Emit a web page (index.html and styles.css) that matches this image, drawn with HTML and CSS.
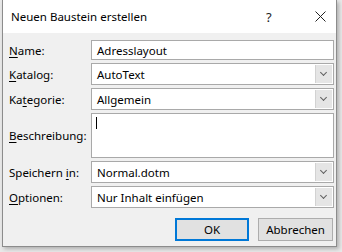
FILE: index.html
```html
<!DOCTYPE html>
<html lang="de">
<head>
    <meta charset="UTF-8">
    <meta name="viewport" content="width=device-width, initial-scale=1.0">
    <title>Neuen Baustein erstellen</title>
    <link rel="stylesheet" href="styles.css">
</head>
<body>

<div class="dialog">
    <div class="titlebar">
        <span class="title">Neuen Baustein erstellen</span>
        <span class="help">?</span>
        <span class="close">
            <svg width="11" height="11" viewBox="0 0 11 11"><path d="M0.5 0.5 L10.5 10.5 M10.5 0.5 L0.5 10.5" stroke="#222" stroke-width="1" fill="none"/></svg>
        </span>
    </div>

    <div class="content">
        <div class="form">
            <label class="label"><span><u>N</u>ame:</span></label>
            <div class="field">Adresslayout</div>

            <label class="label"><span><u>K</u>atalog:</span></label>
            <div class="field combo">AutoText<span class="arrow"></span></div>

            <label class="label"><span>Ka<u>t</u>egorie:</span></label>
            <div class="field combo">Allgemein<span class="arrow"></span></div>

            <label class="label"><span><u>B</u>eschreibung:</span></label>
            <div class="field area"><span class="caret"></span></div>

            <label class="label"><span>Speichern <u>i</u>n:</span></label>
            <div class="field combo">Normal.dotm<span class="arrow"></span></div>

            <label class="label"><span><u>O</u>ptionen:</span></label>
            <div class="field combo">Nur Inhalt einfügen<span class="arrow"></span></div>
        </div>

        <div class="buttons">
            <button class="btn default">OK</button>
            <button class="btn">Abbrechen</button>
        </div>
    </div>
</div>

</body>
</html>
```

FILE: styles.css
```css
body {
    margin: 0;
    width: 342px;
    height: 252px;
    background-color: #e9e9e9;
    font-family: "Noto Sans", "Open Sans", sans-serif;
    font-size: 11.5px;
    color: #000;
    overflow: hidden;
}
.dialog {
    margin-left: 2px;
    width: 335px;
    height: 247px;
    border: 1px solid #8c8c8c;
    border-top: none;
    background-color: #f0f0f0;
    box-sizing: border-box;
    box-shadow: 2px 2px 4px rgba(0, 0, 0, 0.25);
}
.titlebar {
    height: 33px;
    background: white;
    display: flex;
    align-items: center;
    padding-left: 8px;
}
.title {
    flex: 1;
    padding-bottom: 1px;
}
.help {
    width: 12px;
    margin-right: 37px;
    font-size: 13px;
    color: #222;
}
.close {
    width: 11px;
    height: 11px;
    margin-right: 10px;
    margin-bottom: 1px;
}
.close svg {
    display: block;
}
.content {
    padding: 7px 0 0 6px;
}
.form {
    display: grid;
    grid-template-columns: 82px 243px;
    row-gap: 3px;
}
.label {
    display: flex;
    align-items: center;
}
.label u {
    text-underline-offset: 2px;
}
.field {
    height: 20px;
    border: 1px solid #a9a9a9;
    background: white;
    box-sizing: border-box;
    display: flex;
    align-items: center;
    padding-left: 5px;
    position: relative;
}
.combo {
    height: 22px;
}
.area {
    height: 45px;
    align-items: flex-start;
    padding-top: 3px;
}
.caret {
    width: 1px;
    height: 12px;
    background: #000;
    margin-left: -1px;
}
.arrow {
    position: absolute;
    right: 1px;
    top: 1px;
    bottom: 1px;
    width: 16px;
    background: #e5e5e5;
    border-left: 1px solid #d2d2d2;
}
.arrow::after {
    content: "";
    position: absolute;
    left: 5px;
    top: 5px;
    width: 4px;
    height: 4px;
    border-right: 1px solid #606060;
    border-bottom: 1px solid #606060;
    transform: rotate(45deg);
}
.buttons {
    display: flex;
    justify-content: flex-end;
    gap: 9px;
    margin-top: 10px;
    padding-right: 3px;
}
.btn {
    height: 23px;
    width: 75px;
    border: 1px solid #adadad;
    background-color: #e1e1e1;
    font-family: "Noto Sans", "Open Sans", sans-serif;
    font-size: 11.5px;
    padding: 0;
    color: #000;
}
.default {
    width: 74px;
    border: 2px solid #0078d7;
}
```
